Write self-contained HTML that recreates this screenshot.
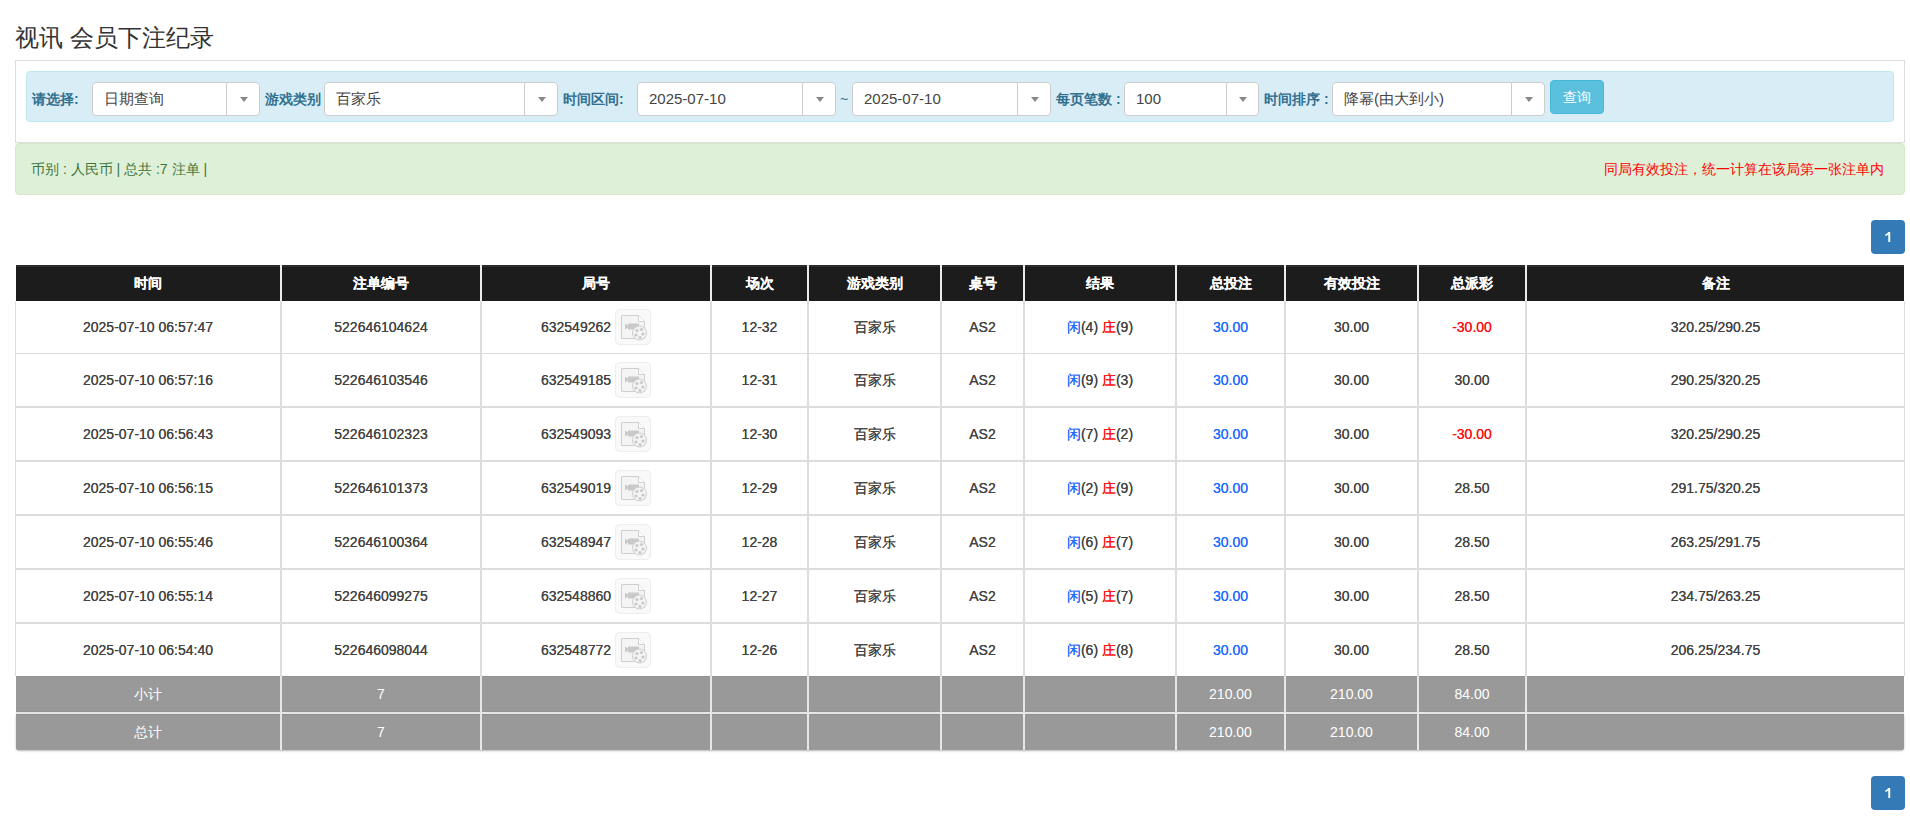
<!DOCTYPE html>
<html><head><meta charset="utf-8">
<style>
*{box-sizing:border-box;margin:0;padding:0}
html,body{width:1910px;height:819px;overflow:hidden;background:#fff}
body{font-family:"Liberation Sans",sans-serif;font-size:14px;color:#333;position:relative}
.abs{position:absolute}
h1{position:absolute;left:15px;top:22px;font-size:24px;font-weight:normal;line-height:32px;color:#333;white-space:nowrap}
.panel{position:absolute;left:15px;top:60px;width:1890px;height:83px;border:1px solid #ddd;background:#fff}
.bar{position:absolute;left:26px;top:71px;width:1868px;height:51px;background:#d9edf7;border:1px solid #bce8f1;border-radius:4px}
.lbl{position:absolute;top:90px;line-height:18px;font-weight:bold;color:#31708f;white-space:nowrap}
.sel{position:absolute;top:82px;height:34px;background:#fff;border:1px solid #ccc;border-radius:4px}
.sel .t{position:absolute;left:11px;top:7px;line-height:18px;font-size:15px;color:#444;white-space:nowrap}
.sel .sep{position:absolute;top:0;bottom:0;width:1px;background:#ccc}
.sel .arr{position:absolute;top:14px;width:0;height:0;border-style:solid;border-width:5px 4px 0 4px;border-color:#888 transparent transparent transparent}
.btn{position:absolute;left:1550px;top:80px;width:54px;height:34px;background:#5bc0de;border:1px solid #46b8da;border-radius:4px;color:#fff;text-align:center;line-height:32px}
.alert{position:absolute;left:15px;top:143px;width:1890px;height:52px;background:#dff0d8;border:1px solid #d6e9c6;border-radius:4px}
.pg{position:absolute;left:1871px;width:34px;height:34px;background:#337ab7;border-radius:4px;color:#fff;text-align:center;line-height:34px}
.tbl{position:absolute;left:0;top:0}
.c{position:absolute;text-align:center;white-space:nowrap}
.hd{background:#1c1c1c}
.th{color:#fff;font-weight:bold}
.vl{position:absolute;width:2px}
.hl{position:absolute;left:15px;width:1890px;background:#ddd}
.gray{position:absolute;left:16px;width:1888px;background:#999}
.b{color:#1f6cff}.r{color:#ff1010}
.td{color:#444}
.ico{display:inline-block;vertical-align:middle;width:36px;height:36px;border:1px solid #eee;border-radius:5px;background:#f9f9f9;margin-left:4px;position:relative;top:-1px}
</style></head><body>
<h1>视讯 会员下注纪录</h1>
<div class="panel"></div>
<div class="bar"></div>
<div class="lbl" style="left:32px">请选择:</div>
<div class="sel" style="left:92px;width:168px"><span class="t">日期查询</span><span class="sep" style="left:133px"></span><span class="arr" style="left:147px"></span></div>
<div class="lbl" style="left:265px">游戏类别</div>
<div class="sel" style="left:324px;width:234px"><span class="t">百家乐</span><span class="sep" style="left:199px"></span><span class="arr" style="left:213px"></span></div>
<div class="lbl" style="left:563px">时间区间:</div>
<div class="sel" style="left:637px;width:199px"><span class="t">2025-07-10</span><span class="sep" style="left:164px"></span><span class="arr" style="left:178px"></span></div>
<div class="lbl" style="left:840px;font-weight:normal">~</div>
<div class="sel" style="left:852px;width:199px"><span class="t">2025-07-10</span><span class="sep" style="left:164px"></span><span class="arr" style="left:178px"></span></div>
<div class="lbl" style="left:1056px">每页笔数 :</div>
<div class="sel" style="left:1124px;width:135px"><span class="t">100</span><span class="sep" style="left:101px"></span><span class="arr" style="left:114px"></span></div>
<div class="lbl" style="left:1264px">时间排序 :</div>
<div class="sel" style="left:1332px;width:213px"><span class="t">降幂(由大到小)</span><span class="sep" style="left:178px"></span><span class="arr" style="left:192px"></span></div>
<div class="btn">查询</div>
<div class="alert"></div>
<div class="abs" style="left:31px;top:160px;line-height:18px;color:#3c763d;white-space:nowrap">币别 : 人民币 | 总共 :7 注单 |</div>
<div class="abs" style="left:1604px;top:160px;line-height:18px;color:#ff0000;white-space:nowrap">同局有效投注，统一计算在该局第一张注单内</div>
<div class="pg" style="top:220px"><svg width="34" height="34" viewBox="0 0 34 34" style="display:block"><path d="M17.3 12h1.9v10h-1.9v-7.6c-.8.7-1.8 1.2-3 1.6v-1.6c1.3-.5 2.3-1.3 3-2.4z" fill="#fff"/></svg></div>
<div id="tbl">
<div class="abs hd" style="left:16px;top:265px;width:1888px;height:36px"></div>
<div class="abs" style="left:16px;top:265px;width:1888px;height:2px;background:#2b2b2b"></div>
<div class="c th" style="left:16px;top:265px;width:264px;line-height:36px">时间</div>
<div class="c th" style="left:282px;top:265px;width:198px;line-height:36px">注单编号</div>
<div class="c th" style="left:482px;top:265px;width:228px;line-height:36px">局号</div>
<div class="c th" style="left:712px;top:265px;width:95px;line-height:36px">场次</div>
<div class="c th" style="left:809px;top:265px;width:131px;line-height:36px">游戏类别</div>
<div class="c th" style="left:942px;top:265px;width:81px;line-height:36px">桌号</div>
<div class="c th" style="left:1025px;top:265px;width:150px;line-height:36px">结果</div>
<div class="c th" style="left:1177px;top:265px;width:107px;line-height:36px">总投注</div>
<div class="c th" style="left:1286px;top:265px;width:131px;line-height:36px">有效投注</div>
<div class="c th" style="left:1419px;top:265px;width:106px;line-height:36px">总派彩</div>
<div class="c th" style="left:1527px;top:265px;width:377px;line-height:36px">备注</div>
<div class="c td" style="left:16px;top:301px;width:264px;height:52px;line-height:52px">2025-07-10 06:57:47</div>
<div class="c td" style="left:282px;top:301px;width:198px;height:52px;line-height:52px">522646104624</div>
<div class="c td" style="left:482px;top:301px;width:228px;height:52px;line-height:52px">632549262<span class="ico"><svg width="36" height="36" viewBox="0 0 36 36" style="position:absolute;left:-1px;top:-1px"><path d="M6.5 6.5h17l6 6v17h-23z" fill="#f4f4f4" stroke="#cccccc" stroke-width="1"/><path d="M23.5 6.5v6h6" fill="#fff" stroke="#cccccc" stroke-width="1"/><path d="M10 14l2.6 2.2v-2.2h10.6v6.8h-10.6v-2.2l-2.6 2.2z" fill="#c6c6c6"/><circle cx="24" cy="23.6" r="7" fill="#f4f4f4" stroke="#cccccc" stroke-width="1"/><circle cx="21.3" cy="20.7" r="1.8" fill="#c6c6c6"/><circle cx="25.8" cy="19.8" r="1.8" fill="#c6c6c6"/><circle cx="27.9" cy="23.7" r="1.8" fill="#c6c6c6"/><circle cx="24.4" cy="27" r="1.8" fill="#c6c6c6"/><circle cx="20.5" cy="25.2" r="1.8" fill="#c6c6c6"/><circle cx="23.8" cy="23.3" r="0.6" fill="#c6c6c6"/></svg></span></div>
<div class="c td" style="left:712px;top:301px;width:95px;height:52px;line-height:52px">12-32</div>
<div class="c td" style="left:809px;top:301px;width:131px;height:52px;line-height:52px">百家乐</div>
<div class="c td" style="left:942px;top:301px;width:81px;height:52px;line-height:52px">AS2</div>
<div class="c td" style="left:1025px;top:301px;width:150px;height:52px;line-height:52px"><span class="b">闲</span>(4) <span class="r">庄</span>(9)</div>
<div class="c td" style="left:1177px;top:301px;width:107px;height:52px;line-height:52px"><span class="b">30.00</span></div>
<div class="c td" style="left:1286px;top:301px;width:131px;height:52px;line-height:52px">30.00</div>
<div class="c td" style="left:1419px;top:301px;width:106px;height:52px;line-height:52px"><span class="r">-30.00</span></div>
<div class="c td" style="left:1527px;top:301px;width:377px;height:52px;line-height:52px">320.25/290.25</div>
<div class="c td" style="left:16px;top:354px;width:264px;height:52px;line-height:52px">2025-07-10 06:57:16</div>
<div class="c td" style="left:282px;top:354px;width:198px;height:52px;line-height:52px">522646103546</div>
<div class="c td" style="left:482px;top:354px;width:228px;height:52px;line-height:52px">632549185<span class="ico"><svg width="36" height="36" viewBox="0 0 36 36" style="position:absolute;left:-1px;top:-1px"><path d="M6.5 6.5h17l6 6v17h-23z" fill="#f4f4f4" stroke="#cccccc" stroke-width="1"/><path d="M23.5 6.5v6h6" fill="#fff" stroke="#cccccc" stroke-width="1"/><path d="M10 14l2.6 2.2v-2.2h10.6v6.8h-10.6v-2.2l-2.6 2.2z" fill="#c6c6c6"/><circle cx="24" cy="23.6" r="7" fill="#f4f4f4" stroke="#cccccc" stroke-width="1"/><circle cx="21.3" cy="20.7" r="1.8" fill="#c6c6c6"/><circle cx="25.8" cy="19.8" r="1.8" fill="#c6c6c6"/><circle cx="27.9" cy="23.7" r="1.8" fill="#c6c6c6"/><circle cx="24.4" cy="27" r="1.8" fill="#c6c6c6"/><circle cx="20.5" cy="25.2" r="1.8" fill="#c6c6c6"/><circle cx="23.8" cy="23.3" r="0.6" fill="#c6c6c6"/></svg></span></div>
<div class="c td" style="left:712px;top:354px;width:95px;height:52px;line-height:52px">12-31</div>
<div class="c td" style="left:809px;top:354px;width:131px;height:52px;line-height:52px">百家乐</div>
<div class="c td" style="left:942px;top:354px;width:81px;height:52px;line-height:52px">AS2</div>
<div class="c td" style="left:1025px;top:354px;width:150px;height:52px;line-height:52px"><span class="b">闲</span>(9) <span class="r">庄</span>(3)</div>
<div class="c td" style="left:1177px;top:354px;width:107px;height:52px;line-height:52px"><span class="b">30.00</span></div>
<div class="c td" style="left:1286px;top:354px;width:131px;height:52px;line-height:52px">30.00</div>
<div class="c td" style="left:1419px;top:354px;width:106px;height:52px;line-height:52px">30.00</div>
<div class="c td" style="left:1527px;top:354px;width:377px;height:52px;line-height:52px">290.25/320.25</div>
<div class="c td" style="left:16px;top:408px;width:264px;height:52px;line-height:52px">2025-07-10 06:56:43</div>
<div class="c td" style="left:282px;top:408px;width:198px;height:52px;line-height:52px">522646102323</div>
<div class="c td" style="left:482px;top:408px;width:228px;height:52px;line-height:52px">632549093<span class="ico"><svg width="36" height="36" viewBox="0 0 36 36" style="position:absolute;left:-1px;top:-1px"><path d="M6.5 6.5h17l6 6v17h-23z" fill="#f4f4f4" stroke="#cccccc" stroke-width="1"/><path d="M23.5 6.5v6h6" fill="#fff" stroke="#cccccc" stroke-width="1"/><path d="M10 14l2.6 2.2v-2.2h10.6v6.8h-10.6v-2.2l-2.6 2.2z" fill="#c6c6c6"/><circle cx="24" cy="23.6" r="7" fill="#f4f4f4" stroke="#cccccc" stroke-width="1"/><circle cx="21.3" cy="20.7" r="1.8" fill="#c6c6c6"/><circle cx="25.8" cy="19.8" r="1.8" fill="#c6c6c6"/><circle cx="27.9" cy="23.7" r="1.8" fill="#c6c6c6"/><circle cx="24.4" cy="27" r="1.8" fill="#c6c6c6"/><circle cx="20.5" cy="25.2" r="1.8" fill="#c6c6c6"/><circle cx="23.8" cy="23.3" r="0.6" fill="#c6c6c6"/></svg></span></div>
<div class="c td" style="left:712px;top:408px;width:95px;height:52px;line-height:52px">12-30</div>
<div class="c td" style="left:809px;top:408px;width:131px;height:52px;line-height:52px">百家乐</div>
<div class="c td" style="left:942px;top:408px;width:81px;height:52px;line-height:52px">AS2</div>
<div class="c td" style="left:1025px;top:408px;width:150px;height:52px;line-height:52px"><span class="b">闲</span>(7) <span class="r">庄</span>(2)</div>
<div class="c td" style="left:1177px;top:408px;width:107px;height:52px;line-height:52px"><span class="b">30.00</span></div>
<div class="c td" style="left:1286px;top:408px;width:131px;height:52px;line-height:52px">30.00</div>
<div class="c td" style="left:1419px;top:408px;width:106px;height:52px;line-height:52px"><span class="r">-30.00</span></div>
<div class="c td" style="left:1527px;top:408px;width:377px;height:52px;line-height:52px">320.25/290.25</div>
<div class="c td" style="left:16px;top:462px;width:264px;height:52px;line-height:52px">2025-07-10 06:56:15</div>
<div class="c td" style="left:282px;top:462px;width:198px;height:52px;line-height:52px">522646101373</div>
<div class="c td" style="left:482px;top:462px;width:228px;height:52px;line-height:52px">632549019<span class="ico"><svg width="36" height="36" viewBox="0 0 36 36" style="position:absolute;left:-1px;top:-1px"><path d="M6.5 6.5h17l6 6v17h-23z" fill="#f4f4f4" stroke="#cccccc" stroke-width="1"/><path d="M23.5 6.5v6h6" fill="#fff" stroke="#cccccc" stroke-width="1"/><path d="M10 14l2.6 2.2v-2.2h10.6v6.8h-10.6v-2.2l-2.6 2.2z" fill="#c6c6c6"/><circle cx="24" cy="23.6" r="7" fill="#f4f4f4" stroke="#cccccc" stroke-width="1"/><circle cx="21.3" cy="20.7" r="1.8" fill="#c6c6c6"/><circle cx="25.8" cy="19.8" r="1.8" fill="#c6c6c6"/><circle cx="27.9" cy="23.7" r="1.8" fill="#c6c6c6"/><circle cx="24.4" cy="27" r="1.8" fill="#c6c6c6"/><circle cx="20.5" cy="25.2" r="1.8" fill="#c6c6c6"/><circle cx="23.8" cy="23.3" r="0.6" fill="#c6c6c6"/></svg></span></div>
<div class="c td" style="left:712px;top:462px;width:95px;height:52px;line-height:52px">12-29</div>
<div class="c td" style="left:809px;top:462px;width:131px;height:52px;line-height:52px">百家乐</div>
<div class="c td" style="left:942px;top:462px;width:81px;height:52px;line-height:52px">AS2</div>
<div class="c td" style="left:1025px;top:462px;width:150px;height:52px;line-height:52px"><span class="b">闲</span>(2) <span class="r">庄</span>(9)</div>
<div class="c td" style="left:1177px;top:462px;width:107px;height:52px;line-height:52px"><span class="b">30.00</span></div>
<div class="c td" style="left:1286px;top:462px;width:131px;height:52px;line-height:52px">30.00</div>
<div class="c td" style="left:1419px;top:462px;width:106px;height:52px;line-height:52px">28.50</div>
<div class="c td" style="left:1527px;top:462px;width:377px;height:52px;line-height:52px">291.75/320.25</div>
<div class="c td" style="left:16px;top:516px;width:264px;height:52px;line-height:52px">2025-07-10 06:55:46</div>
<div class="c td" style="left:282px;top:516px;width:198px;height:52px;line-height:52px">522646100364</div>
<div class="c td" style="left:482px;top:516px;width:228px;height:52px;line-height:52px">632548947<span class="ico"><svg width="36" height="36" viewBox="0 0 36 36" style="position:absolute;left:-1px;top:-1px"><path d="M6.5 6.5h17l6 6v17h-23z" fill="#f4f4f4" stroke="#cccccc" stroke-width="1"/><path d="M23.5 6.5v6h6" fill="#fff" stroke="#cccccc" stroke-width="1"/><path d="M10 14l2.6 2.2v-2.2h10.6v6.8h-10.6v-2.2l-2.6 2.2z" fill="#c6c6c6"/><circle cx="24" cy="23.6" r="7" fill="#f4f4f4" stroke="#cccccc" stroke-width="1"/><circle cx="21.3" cy="20.7" r="1.8" fill="#c6c6c6"/><circle cx="25.8" cy="19.8" r="1.8" fill="#c6c6c6"/><circle cx="27.9" cy="23.7" r="1.8" fill="#c6c6c6"/><circle cx="24.4" cy="27" r="1.8" fill="#c6c6c6"/><circle cx="20.5" cy="25.2" r="1.8" fill="#c6c6c6"/><circle cx="23.8" cy="23.3" r="0.6" fill="#c6c6c6"/></svg></span></div>
<div class="c td" style="left:712px;top:516px;width:95px;height:52px;line-height:52px">12-28</div>
<div class="c td" style="left:809px;top:516px;width:131px;height:52px;line-height:52px">百家乐</div>
<div class="c td" style="left:942px;top:516px;width:81px;height:52px;line-height:52px">AS2</div>
<div class="c td" style="left:1025px;top:516px;width:150px;height:52px;line-height:52px"><span class="b">闲</span>(6) <span class="r">庄</span>(7)</div>
<div class="c td" style="left:1177px;top:516px;width:107px;height:52px;line-height:52px"><span class="b">30.00</span></div>
<div class="c td" style="left:1286px;top:516px;width:131px;height:52px;line-height:52px">30.00</div>
<div class="c td" style="left:1419px;top:516px;width:106px;height:52px;line-height:52px">28.50</div>
<div class="c td" style="left:1527px;top:516px;width:377px;height:52px;line-height:52px">263.25/291.75</div>
<div class="c td" style="left:16px;top:570px;width:264px;height:52px;line-height:52px">2025-07-10 06:55:14</div>
<div class="c td" style="left:282px;top:570px;width:198px;height:52px;line-height:52px">522646099275</div>
<div class="c td" style="left:482px;top:570px;width:228px;height:52px;line-height:52px">632548860<span class="ico"><svg width="36" height="36" viewBox="0 0 36 36" style="position:absolute;left:-1px;top:-1px"><path d="M6.5 6.5h17l6 6v17h-23z" fill="#f4f4f4" stroke="#cccccc" stroke-width="1"/><path d="M23.5 6.5v6h6" fill="#fff" stroke="#cccccc" stroke-width="1"/><path d="M10 14l2.6 2.2v-2.2h10.6v6.8h-10.6v-2.2l-2.6 2.2z" fill="#c6c6c6"/><circle cx="24" cy="23.6" r="7" fill="#f4f4f4" stroke="#cccccc" stroke-width="1"/><circle cx="21.3" cy="20.7" r="1.8" fill="#c6c6c6"/><circle cx="25.8" cy="19.8" r="1.8" fill="#c6c6c6"/><circle cx="27.9" cy="23.7" r="1.8" fill="#c6c6c6"/><circle cx="24.4" cy="27" r="1.8" fill="#c6c6c6"/><circle cx="20.5" cy="25.2" r="1.8" fill="#c6c6c6"/><circle cx="23.8" cy="23.3" r="0.6" fill="#c6c6c6"/></svg></span></div>
<div class="c td" style="left:712px;top:570px;width:95px;height:52px;line-height:52px">12-27</div>
<div class="c td" style="left:809px;top:570px;width:131px;height:52px;line-height:52px">百家乐</div>
<div class="c td" style="left:942px;top:570px;width:81px;height:52px;line-height:52px">AS2</div>
<div class="c td" style="left:1025px;top:570px;width:150px;height:52px;line-height:52px"><span class="b">闲</span>(5) <span class="r">庄</span>(7)</div>
<div class="c td" style="left:1177px;top:570px;width:107px;height:52px;line-height:52px"><span class="b">30.00</span></div>
<div class="c td" style="left:1286px;top:570px;width:131px;height:52px;line-height:52px">30.00</div>
<div class="c td" style="left:1419px;top:570px;width:106px;height:52px;line-height:52px">28.50</div>
<div class="c td" style="left:1527px;top:570px;width:377px;height:52px;line-height:52px">234.75/263.25</div>
<div class="c td" style="left:16px;top:624px;width:264px;height:52px;line-height:52px">2025-07-10 06:54:40</div>
<div class="c td" style="left:282px;top:624px;width:198px;height:52px;line-height:52px">522646098044</div>
<div class="c td" style="left:482px;top:624px;width:228px;height:52px;line-height:52px">632548772<span class="ico"><svg width="36" height="36" viewBox="0 0 36 36" style="position:absolute;left:-1px;top:-1px"><path d="M6.5 6.5h17l6 6v17h-23z" fill="#f4f4f4" stroke="#cccccc" stroke-width="1"/><path d="M23.5 6.5v6h6" fill="#fff" stroke="#cccccc" stroke-width="1"/><path d="M10 14l2.6 2.2v-2.2h10.6v6.8h-10.6v-2.2l-2.6 2.2z" fill="#c6c6c6"/><circle cx="24" cy="23.6" r="7" fill="#f4f4f4" stroke="#cccccc" stroke-width="1"/><circle cx="21.3" cy="20.7" r="1.8" fill="#c6c6c6"/><circle cx="25.8" cy="19.8" r="1.8" fill="#c6c6c6"/><circle cx="27.9" cy="23.7" r="1.8" fill="#c6c6c6"/><circle cx="24.4" cy="27" r="1.8" fill="#c6c6c6"/><circle cx="20.5" cy="25.2" r="1.8" fill="#c6c6c6"/><circle cx="23.8" cy="23.3" r="0.6" fill="#c6c6c6"/></svg></span></div>
<div class="c td" style="left:712px;top:624px;width:95px;height:52px;line-height:52px">12-26</div>
<div class="c td" style="left:809px;top:624px;width:131px;height:52px;line-height:52px">百家乐</div>
<div class="c td" style="left:942px;top:624px;width:81px;height:52px;line-height:52px">AS2</div>
<div class="c td" style="left:1025px;top:624px;width:150px;height:52px;line-height:52px"><span class="b">闲</span>(6) <span class="r">庄</span>(8)</div>
<div class="c td" style="left:1177px;top:624px;width:107px;height:52px;line-height:52px"><span class="b">30.00</span></div>
<div class="c td" style="left:1286px;top:624px;width:131px;height:52px;line-height:52px">30.00</div>
<div class="c td" style="left:1419px;top:624px;width:106px;height:52px;line-height:52px">28.50</div>
<div class="c td" style="left:1527px;top:624px;width:377px;height:52px;line-height:52px">206.25/234.75</div>
<div class="hl" style="top:353px;height:1px"></div>
<div class="hl" style="top:406px;height:2px"></div>
<div class="hl" style="top:460px;height:2px"></div>
<div class="hl" style="top:514px;height:2px"></div>
<div class="hl" style="top:568px;height:2px"></div>
<div class="hl" style="top:622px;height:2px"></div>
<div class="gray" style="top:676px;height:36px;border-top:1px solid #919191;border-bottom:1px solid #919191"></div>
<div class="abs" style="left:16px;top:712px;width:1888px;height:2px;background:#e6e6e6"></div>
<div class="gray" style="top:714px;height:36px;border-top:1px solid #919191;border-radius:0 0 3px 3px;box-shadow:0 1px 2px rgba(0,0,0,.15)"></div>
<div class="c tg" style="left:16px;top:676px;width:264px;height:36px;line-height:36px;color:#fff">小计</div>
<div class="c tg" style="left:282px;top:676px;width:198px;height:36px;line-height:36px;color:#fff">7</div>
<div class="c tg" style="left:1177px;top:676px;width:107px;height:36px;line-height:36px;color:#fff">210.00</div>
<div class="c tg" style="left:1286px;top:676px;width:131px;height:36px;line-height:36px;color:#fff">210.00</div>
<div class="c tg" style="left:1419px;top:676px;width:106px;height:36px;line-height:36px;color:#fff">84.00</div>
<div class="c tg" style="left:16px;top:714px;width:264px;height:36px;line-height:36px;color:#fff">总计</div>
<div class="c tg" style="left:282px;top:714px;width:198px;height:36px;line-height:36px;color:#fff">7</div>
<div class="c tg" style="left:1177px;top:714px;width:107px;height:36px;line-height:36px;color:#fff">210.00</div>
<div class="c tg" style="left:1286px;top:714px;width:131px;height:36px;line-height:36px;color:#fff">210.00</div>
<div class="c tg" style="left:1419px;top:714px;width:106px;height:36px;line-height:36px;color:#fff">84.00</div>
<div class="abs" style="left:15px;top:301px;width:1px;height:375px;background:#ddd"></div>
<div class="abs" style="left:1904px;top:301px;width:1px;height:375px;background:#ddd"></div>
<div class="vl" style="left:280px;top:265px;height:36px;background:#ececec"></div>
<div class="vl" style="left:280px;top:301px;height:375px;background:#ddd"></div>
<div class="vl" style="left:280px;top:676px;height:74px;background:#e6e6e6"></div>
<div class="vl" style="left:480px;top:265px;height:36px;background:#ececec"></div>
<div class="vl" style="left:480px;top:301px;height:375px;background:#ddd"></div>
<div class="vl" style="left:480px;top:676px;height:74px;background:#e6e6e6"></div>
<div class="vl" style="left:710px;top:265px;height:36px;background:#ececec"></div>
<div class="vl" style="left:710px;top:301px;height:375px;background:#ddd"></div>
<div class="vl" style="left:710px;top:676px;height:74px;background:#e6e6e6"></div>
<div class="vl" style="left:807px;top:265px;height:36px;background:#ececec"></div>
<div class="vl" style="left:807px;top:301px;height:375px;background:#ddd"></div>
<div class="vl" style="left:807px;top:676px;height:74px;background:#e6e6e6"></div>
<div class="vl" style="left:940px;top:265px;height:36px;background:#ececec"></div>
<div class="vl" style="left:940px;top:301px;height:375px;background:#ddd"></div>
<div class="vl" style="left:940px;top:676px;height:74px;background:#e6e6e6"></div>
<div class="vl" style="left:1023px;top:265px;height:36px;background:#ececec"></div>
<div class="vl" style="left:1023px;top:301px;height:375px;background:#ddd"></div>
<div class="vl" style="left:1023px;top:676px;height:74px;background:#e6e6e6"></div>
<div class="vl" style="left:1175px;top:265px;height:36px;background:#ececec"></div>
<div class="vl" style="left:1175px;top:301px;height:375px;background:#ddd"></div>
<div class="vl" style="left:1175px;top:676px;height:74px;background:#e6e6e6"></div>
<div class="vl" style="left:1284px;top:265px;height:36px;background:#ececec"></div>
<div class="vl" style="left:1284px;top:301px;height:375px;background:#ddd"></div>
<div class="vl" style="left:1284px;top:676px;height:74px;background:#e6e6e6"></div>
<div class="vl" style="left:1417px;top:265px;height:36px;background:#ececec"></div>
<div class="vl" style="left:1417px;top:301px;height:375px;background:#ddd"></div>
<div class="vl" style="left:1417px;top:676px;height:74px;background:#e6e6e6"></div>
<div class="vl" style="left:1525px;top:265px;height:36px;background:#ececec"></div>
<div class="vl" style="left:1525px;top:301px;height:375px;background:#ddd"></div>
<div class="vl" style="left:1525px;top:676px;height:74px;background:#e6e6e6"></div>
</div>
<div class="abs" style="left:16px;top:265px;width:1888px;height:2px;background:#2b2b2b"></div>
<div class="c th" style="left:16px;top:265px;width:264px;line-height:36px">时间</div>
<div class="c th" style="left:282px;top:265px;width:198px;line-height:36px">注单编号</div>
<div class="c th" style="left:482px;top:265px;width:228px;line-height:36px">局号</div>
<div class="c th" style="left:712px;top:265px;width:95px;line-height:36px">场次</div>
<div class="c th" style="left:809px;top:265px;width:131px;line-height:36px">游戏类别</div>
<div class="c th" style="left:942px;top:265px;width:81px;line-height:36px">桌号</div>
<div class="c th" style="left:1025px;top:265px;width:150px;line-height:36px">结果</div>
<div class="c th" style="left:1177px;top:265px;width:107px;line-height:36px">总投注</div>
<div class="c th" style="left:1286px;top:265px;width:131px;line-height:36px">有效投注</div>
<div class="c th" style="left:1419px;top:265px;width:106px;line-height:36px">总派彩</div>
<div class="c th" style="left:1527px;top:265px;width:377px;line-height:36px">备注</div>
<div class="c td" style="left:16px;top:301px;width:264px;height:52px;line-height:52px">2025-07-10 06:57:47</div>
<div class="c td" style="left:282px;top:301px;width:198px;height:52px;line-height:52px">522646104624</div>
<div class="c td" style="left:482px;top:301px;width:228px;height:52px;line-height:52px">632549262<span class="ico"><svg width="36" height="36" viewBox="0 0 36 36" style="position:absolute;left:-1px;top:-1px"><path d="M6.5 6.5h17l6 6v17h-23z" fill="#f4f4f4" stroke="#cfcfcf" stroke-width="1"/><path d="M23.5 6.5v6h6" fill="#fff" stroke="#cfcfcf" stroke-width="1"/><path d="M10 14.5l3 2v-2h11v6h-11v-2l-3 2z" fill="#c9c9c9"/><circle cx="24.5" cy="24" r="7" fill="#f4f4f4" stroke="#cfcfcf" stroke-width="1"/><circle cx="22" cy="21.5" r="1.6" fill="#c9c9c9"/><circle cx="26.5" cy="20.5" r="1.6" fill="#c9c9c9"/><circle cx="28" cy="25" r="1.6" fill="#c9c9c9"/><circle cx="25" cy="28.5" r="1.6" fill="#c9c9c9"/><circle cx="21" cy="26" r="1.6" fill="#c9c9c9"/></svg></span></div>
<div class="c td" style="left:712px;top:301px;width:95px;height:52px;line-height:52px">12-32</div>
<div class="c td" style="left:809px;top:301px;width:131px;height:52px;line-height:52px">百家乐</div>
<div class="c td" style="left:942px;top:301px;width:81px;height:52px;line-height:52px">AS2</div>
<div class="c td" style="left:1025px;top:301px;width:150px;height:52px;line-height:52px"><span class="b">闲</span>(4) <span class="r">庄</span>(9)</div>
<div class="c td" style="left:1177px;top:301px;width:107px;height:52px;line-height:52px"><span class="b">30.00</span></div>
<div class="c td" style="left:1286px;top:301px;width:131px;height:52px;line-height:52px">30.00</div>
<div class="c td" style="left:1419px;top:301px;width:106px;height:52px;line-height:52px"><span class="r">-30.00</span></div>
<div class="c td" style="left:1527px;top:301px;width:377px;height:52px;line-height:52px">320.25/290.25</div>
<div class="c td" style="left:16px;top:354px;width:264px;height:52px;line-height:52px">2025-07-10 06:57:16</div>
<div class="c td" style="left:282px;top:354px;width:198px;height:52px;line-height:52px">522646103546</div>
<div class="c td" style="left:482px;top:354px;width:228px;height:52px;line-height:52px">632549185<span class="ico"><svg width="36" height="36" viewBox="0 0 36 36" style="position:absolute;left:-1px;top:-1px"><path d="M6.5 6.5h17l6 6v17h-23z" fill="#f4f4f4" stroke="#cfcfcf" stroke-width="1"/><path d="M23.5 6.5v6h6" fill="#fff" stroke="#cfcfcf" stroke-width="1"/><path d="M10 14.5l3 2v-2h11v6h-11v-2l-3 2z" fill="#c9c9c9"/><circle cx="24.5" cy="24" r="7" fill="#f4f4f4" stroke="#cfcfcf" stroke-width="1"/><circle cx="22" cy="21.5" r="1.6" fill="#c9c9c9"/><circle cx="26.5" cy="20.5" r="1.6" fill="#c9c9c9"/><circle cx="28" cy="25" r="1.6" fill="#c9c9c9"/><circle cx="25" cy="28.5" r="1.6" fill="#c9c9c9"/><circle cx="21" cy="26" r="1.6" fill="#c9c9c9"/></svg></span></div>
<div class="c td" style="left:712px;top:354px;width:95px;height:52px;line-height:52px">12-31</div>
<div class="c td" style="left:809px;top:354px;width:131px;height:52px;line-height:52px">百家乐</div>
<div class="c td" style="left:942px;top:354px;width:81px;height:52px;line-height:52px">AS2</div>
<div class="c td" style="left:1025px;top:354px;width:150px;height:52px;line-height:52px"><span class="b">闲</span>(9) <span class="r">庄</span>(3)</div>
<div class="c td" style="left:1177px;top:354px;width:107px;height:52px;line-height:52px"><span class="b">30.00</span></div>
<div class="c td" style="left:1286px;top:354px;width:131px;height:52px;line-height:52px">30.00</div>
<div class="c td" style="left:1419px;top:354px;width:106px;height:52px;line-height:52px">30.00</div>
<div class="c td" style="left:1527px;top:354px;width:377px;height:52px;line-height:52px">290.25/320.25</div>
<div class="c td" style="left:16px;top:408px;width:264px;height:52px;line-height:52px">2025-07-10 06:56:43</div>
<div class="c td" style="left:282px;top:408px;width:198px;height:52px;line-height:52px">522646102323</div>
<div class="c td" style="left:482px;top:408px;width:228px;height:52px;line-height:52px">632549093<span class="ico"><svg width="36" height="36" viewBox="0 0 36 36" style="position:absolute;left:-1px;top:-1px"><path d="M6.5 6.5h17l6 6v17h-23z" fill="#f4f4f4" stroke="#cfcfcf" stroke-width="1"/><path d="M23.5 6.5v6h6" fill="#fff" stroke="#cfcfcf" stroke-width="1"/><path d="M10 14.5l3 2v-2h11v6h-11v-2l-3 2z" fill="#c9c9c9"/><circle cx="24.5" cy="24" r="7" fill="#f4f4f4" stroke="#cfcfcf" stroke-width="1"/><circle cx="22" cy="21.5" r="1.6" fill="#c9c9c9"/><circle cx="26.5" cy="20.5" r="1.6" fill="#c9c9c9"/><circle cx="28" cy="25" r="1.6" fill="#c9c9c9"/><circle cx="25" cy="28.5" r="1.6" fill="#c9c9c9"/><circle cx="21" cy="26" r="1.6" fill="#c9c9c9"/></svg></span></div>
<div class="c td" style="left:712px;top:408px;width:95px;height:52px;line-height:52px">12-30</div>
<div class="c td" style="left:809px;top:408px;width:131px;height:52px;line-height:52px">百家乐</div>
<div class="c td" style="left:942px;top:408px;width:81px;height:52px;line-height:52px">AS2</div>
<div class="c td" style="left:1025px;top:408px;width:150px;height:52px;line-height:52px"><span class="b">闲</span>(7) <span class="r">庄</span>(2)</div>
<div class="c td" style="left:1177px;top:408px;width:107px;height:52px;line-height:52px"><span class="b">30.00</span></div>
<div class="c td" style="left:1286px;top:408px;width:131px;height:52px;line-height:52px">30.00</div>
<div class="c td" style="left:1419px;top:408px;width:106px;height:52px;line-height:52px"><span class="r">-30.00</span></div>
<div class="c td" style="left:1527px;top:408px;width:377px;height:52px;line-height:52px">320.25/290.25</div>
<div class="c td" style="left:16px;top:462px;width:264px;height:52px;line-height:52px">2025-07-10 06:56:15</div>
<div class="c td" style="left:282px;top:462px;width:198px;height:52px;line-height:52px">522646101373</div>
<div class="c td" style="left:482px;top:462px;width:228px;height:52px;line-height:52px">632549019<span class="ico"><svg width="36" height="36" viewBox="0 0 36 36" style="position:absolute;left:-1px;top:-1px"><path d="M6.5 6.5h17l6 6v17h-23z" fill="#f4f4f4" stroke="#cfcfcf" stroke-width="1"/><path d="M23.5 6.5v6h6" fill="#fff" stroke="#cfcfcf" stroke-width="1"/><path d="M10 14.5l3 2v-2h11v6h-11v-2l-3 2z" fill="#c9c9c9"/><circle cx="24.5" cy="24" r="7" fill="#f4f4f4" stroke="#cfcfcf" stroke-width="1"/><circle cx="22" cy="21.5" r="1.6" fill="#c9c9c9"/><circle cx="26.5" cy="20.5" r="1.6" fill="#c9c9c9"/><circle cx="28" cy="25" r="1.6" fill="#c9c9c9"/><circle cx="25" cy="28.5" r="1.6" fill="#c9c9c9"/><circle cx="21" cy="26" r="1.6" fill="#c9c9c9"/></svg></span></div>
<div class="c td" style="left:712px;top:462px;width:95px;height:52px;line-height:52px">12-29</div>
<div class="c td" style="left:809px;top:462px;width:131px;height:52px;line-height:52px">百家乐</div>
<div class="c td" style="left:942px;top:462px;width:81px;height:52px;line-height:52px">AS2</div>
<div class="c td" style="left:1025px;top:462px;width:150px;height:52px;line-height:52px"><span class="b">闲</span>(2) <span class="r">庄</span>(9)</div>
<div class="c td" style="left:1177px;top:462px;width:107px;height:52px;line-height:52px"><span class="b">30.00</span></div>
<div class="c td" style="left:1286px;top:462px;width:131px;height:52px;line-height:52px">30.00</div>
<div class="c td" style="left:1419px;top:462px;width:106px;height:52px;line-height:52px">28.50</div>
<div class="c td" style="left:1527px;top:462px;width:377px;height:52px;line-height:52px">291.75/320.25</div>
<div class="c td" style="left:16px;top:516px;width:264px;height:52px;line-height:52px">2025-07-10 06:55:46</div>
<div class="c td" style="left:282px;top:516px;width:198px;height:52px;line-height:52px">522646100364</div>
<div class="c td" style="left:482px;top:516px;width:228px;height:52px;line-height:52px">632548947<span class="ico"><svg width="36" height="36" viewBox="0 0 36 36" style="position:absolute;left:-1px;top:-1px"><path d="M6.5 6.5h17l6 6v17h-23z" fill="#f4f4f4" stroke="#cfcfcf" stroke-width="1"/><path d="M23.5 6.5v6h6" fill="#fff" stroke="#cfcfcf" stroke-width="1"/><path d="M10 14.5l3 2v-2h11v6h-11v-2l-3 2z" fill="#c9c9c9"/><circle cx="24.5" cy="24" r="7" fill="#f4f4f4" stroke="#cfcfcf" stroke-width="1"/><circle cx="22" cy="21.5" r="1.6" fill="#c9c9c9"/><circle cx="26.5" cy="20.5" r="1.6" fill="#c9c9c9"/><circle cx="28" cy="25" r="1.6" fill="#c9c9c9"/><circle cx="25" cy="28.5" r="1.6" fill="#c9c9c9"/><circle cx="21" cy="26" r="1.6" fill="#c9c9c9"/></svg></span></div>
<div class="c td" style="left:712px;top:516px;width:95px;height:52px;line-height:52px">12-28</div>
<div class="c td" style="left:809px;top:516px;width:131px;height:52px;line-height:52px">百家乐</div>
<div class="c td" style="left:942px;top:516px;width:81px;height:52px;line-height:52px">AS2</div>
<div class="c td" style="left:1025px;top:516px;width:150px;height:52px;line-height:52px"><span class="b">闲</span>(6) <span class="r">庄</span>(7)</div>
<div class="c td" style="left:1177px;top:516px;width:107px;height:52px;line-height:52px"><span class="b">30.00</span></div>
<div class="c td" style="left:1286px;top:516px;width:131px;height:52px;line-height:52px">30.00</div>
<div class="c td" style="left:1419px;top:516px;width:106px;height:52px;line-height:52px">28.50</div>
<div class="c td" style="left:1527px;top:516px;width:377px;height:52px;line-height:52px">263.25/291.75</div>
<div class="c td" style="left:16px;top:570px;width:264px;height:52px;line-height:52px">2025-07-10 06:55:14</div>
<div class="c td" style="left:282px;top:570px;width:198px;height:52px;line-height:52px">522646099275</div>
<div class="c td" style="left:482px;top:570px;width:228px;height:52px;line-height:52px">632548860<span class="ico"><svg width="36" height="36" viewBox="0 0 36 36" style="position:absolute;left:-1px;top:-1px"><path d="M6.5 6.5h17l6 6v17h-23z" fill="#f4f4f4" stroke="#cfcfcf" stroke-width="1"/><path d="M23.5 6.5v6h6" fill="#fff" stroke="#cfcfcf" stroke-width="1"/><path d="M10 14.5l3 2v-2h11v6h-11v-2l-3 2z" fill="#c9c9c9"/><circle cx="24.5" cy="24" r="7" fill="#f4f4f4" stroke="#cfcfcf" stroke-width="1"/><circle cx="22" cy="21.5" r="1.6" fill="#c9c9c9"/><circle cx="26.5" cy="20.5" r="1.6" fill="#c9c9c9"/><circle cx="28" cy="25" r="1.6" fill="#c9c9c9"/><circle cx="25" cy="28.5" r="1.6" fill="#c9c9c9"/><circle cx="21" cy="26" r="1.6" fill="#c9c9c9"/></svg></span></div>
<div class="c td" style="left:712px;top:570px;width:95px;height:52px;line-height:52px">12-27</div>
<div class="c td" style="left:809px;top:570px;width:131px;height:52px;line-height:52px">百家乐</div>
<div class="c td" style="left:942px;top:570px;width:81px;height:52px;line-height:52px">AS2</div>
<div class="c td" style="left:1025px;top:570px;width:150px;height:52px;line-height:52px"><span class="b">闲</span>(5) <span class="r">庄</span>(7)</div>
<div class="c td" style="left:1177px;top:570px;width:107px;height:52px;line-height:52px"><span class="b">30.00</span></div>
<div class="c td" style="left:1286px;top:570px;width:131px;height:52px;line-height:52px">30.00</div>
<div class="c td" style="left:1419px;top:570px;width:106px;height:52px;line-height:52px">28.50</div>
<div class="c td" style="left:1527px;top:570px;width:377px;height:52px;line-height:52px">234.75/263.25</div>
<div class="c td" style="left:16px;top:624px;width:264px;height:52px;line-height:52px">2025-07-10 06:54:40</div>
<div class="c td" style="left:282px;top:624px;width:198px;height:52px;line-height:52px">522646098044</div>
<div class="c td" style="left:482px;top:624px;width:228px;height:52px;line-height:52px">632548772<span class="ico"><svg width="36" height="36" viewBox="0 0 36 36" style="position:absolute;left:-1px;top:-1px"><path d="M6.5 6.5h17l6 6v17h-23z" fill="#f4f4f4" stroke="#cfcfcf" stroke-width="1"/><path d="M23.5 6.5v6h6" fill="#fff" stroke="#cfcfcf" stroke-width="1"/><path d="M10 14.5l3 2v-2h11v6h-11v-2l-3 2z" fill="#c9c9c9"/><circle cx="24.5" cy="24" r="7" fill="#f4f4f4" stroke="#cfcfcf" stroke-width="1"/><circle cx="22" cy="21.5" r="1.6" fill="#c9c9c9"/><circle cx="26.5" cy="20.5" r="1.6" fill="#c9c9c9"/><circle cx="28" cy="25" r="1.6" fill="#c9c9c9"/><circle cx="25" cy="28.5" r="1.6" fill="#c9c9c9"/><circle cx="21" cy="26" r="1.6" fill="#c9c9c9"/></svg></span></div>
<div class="c td" style="left:712px;top:624px;width:95px;height:52px;line-height:52px">12-26</div>
<div class="c td" style="left:809px;top:624px;width:131px;height:52px;line-height:52px">百家乐</div>
<div class="c td" style="left:942px;top:624px;width:81px;height:52px;line-height:52px">AS2</div>
<div class="c td" style="left:1025px;top:624px;width:150px;height:52px;line-height:52px"><span class="b">闲</span>(6) <span class="r">庄</span>(8)</div>
<div class="c td" style="left:1177px;top:624px;width:107px;height:52px;line-height:52px"><span class="b">30.00</span></div>
<div class="c td" style="left:1286px;top:624px;width:131px;height:52px;line-height:52px">30.00</div>
<div class="c td" style="left:1419px;top:624px;width:106px;height:52px;line-height:52px">28.50</div>
<div class="c td" style="left:1527px;top:624px;width:377px;height:52px;line-height:52px">206.25/234.75</div>
<div class="hl" style="top:353px;height:1px"></div>
<div class="hl" style="top:406px;height:2px"></div>
<div class="hl" style="top:460px;height:2px"></div>
<div class="hl" style="top:514px;height:2px"></div>
<div class="hl" style="top:568px;height:2px"></div>
<div class="hl" style="top:622px;height:2px"></div>
<div class="gray" style="top:676px;height:36px;border-top:1px solid #919191;border-bottom:1px solid #919191"></div>
<div class="abs" style="left:16px;top:712px;width:1888px;height:2px;background:#e6e6e6"></div>
<div class="gray" style="top:714px;height:36px;border-top:1px solid #919191;border-radius:0 0 3px 3px;box-shadow:0 1px 2px rgba(0,0,0,.15)"></div>
<div class="c tg" style="left:16px;top:676px;width:264px;height:36px;line-height:36px;color:#fff">小计</div>
<div class="c tg" style="left:282px;top:676px;width:198px;height:36px;line-height:36px;color:#fff">7</div>
<div class="c tg" style="left:1177px;top:676px;width:107px;height:36px;line-height:36px;color:#fff">210.00</div>
<div class="c tg" style="left:1286px;top:676px;width:131px;height:36px;line-height:36px;color:#fff">210.00</div>
<div class="c tg" style="left:1419px;top:676px;width:106px;height:36px;line-height:36px;color:#fff">84.00</div>
<div class="c tg" style="left:16px;top:714px;width:264px;height:36px;line-height:36px;color:#fff">总计</div>
<div class="c tg" style="left:282px;top:714px;width:198px;height:36px;line-height:36px;color:#fff">7</div>
<div class="c tg" style="left:1177px;top:714px;width:107px;height:36px;line-height:36px;color:#fff">210.00</div>
<div class="c tg" style="left:1286px;top:714px;width:131px;height:36px;line-height:36px;color:#fff">210.00</div>
<div class="c tg" style="left:1419px;top:714px;width:106px;height:36px;line-height:36px;color:#fff">84.00</div>
<div class="abs" style="left:15px;top:301px;width:1px;height:375px;background:#ddd"></div>
<div class="abs" style="left:1904px;top:301px;width:1px;height:375px;background:#ddd"></div>
<div class="vl" style="left:280px;top:265px;height:36px;background:#ececec"></div>
<div class="vl" style="left:280px;top:301px;height:375px;background:#ddd"></div>
<div class="vl" style="left:280px;top:676px;height:74px;background:#e6e6e6"></div>
<div class="vl" style="left:480px;top:265px;height:36px;background:#ececec"></div>
<div class="vl" style="left:480px;top:301px;height:375px;background:#ddd"></div>
<div class="vl" style="left:480px;top:676px;height:74px;background:#e6e6e6"></div>
<div class="vl" style="left:710px;top:265px;height:36px;background:#ececec"></div>
<div class="vl" style="left:710px;top:301px;height:375px;background:#ddd"></div>
<div class="vl" style="left:710px;top:676px;height:74px;background:#e6e6e6"></div>
<div class="vl" style="left:807px;top:265px;height:36px;background:#ececec"></div>
<div class="vl" style="left:807px;top:301px;height:375px;background:#ddd"></div>
<div class="vl" style="left:807px;top:676px;height:74px;background:#e6e6e6"></div>
<div class="vl" style="left:940px;top:265px;height:36px;background:#ececec"></div>
<div class="vl" style="left:940px;top:301px;height:375px;background:#ddd"></div>
<div class="vl" style="left:940px;top:676px;height:74px;background:#e6e6e6"></div>
<div class="vl" style="left:1023px;top:265px;height:36px;background:#ececec"></div>
<div class="vl" style="left:1023px;top:301px;height:375px;background:#ddd"></div>
<div class="vl" style="left:1023px;top:676px;height:74px;background:#e6e6e6"></div>
<div class="vl" style="left:1175px;top:265px;height:36px;background:#ececec"></div>
<div class="vl" style="left:1175px;top:301px;height:375px;background:#ddd"></div>
<div class="vl" style="left:1175px;top:676px;height:74px;background:#e6e6e6"></div>
<div class="vl" style="left:1284px;top:265px;height:36px;background:#ececec"></div>
<div class="vl" style="left:1284px;top:301px;height:375px;background:#ddd"></div>
<div class="vl" style="left:1284px;top:676px;height:74px;background:#e6e6e6"></div>
<div class="vl" style="left:1417px;top:265px;height:36px;background:#ececec"></div>
<div class="vl" style="left:1417px;top:301px;height:375px;background:#ddd"></div>
<div class="vl" style="left:1417px;top:676px;height:74px;background:#e6e6e6"></div>
<div class="vl" style="left:1525px;top:265px;height:36px;background:#ececec"></div>
<div class="vl" style="left:1525px;top:301px;height:375px;background:#ddd"></div>
<div class="vl" style="left:1525px;top:676px;height:74px;background:#e6e6e6"></div>
</div>
<div class="pg" style="top:776px"><svg width="34" height="34" viewBox="0 0 34 34" style="display:block"><path d="M17.3 12h1.9v10h-1.9v-7.6c-.8.7-1.8 1.2-3 1.6v-1.6c1.3-.5 2.3-1.3 3-2.4z" fill="#fff"/></svg></div>
</body></html>
